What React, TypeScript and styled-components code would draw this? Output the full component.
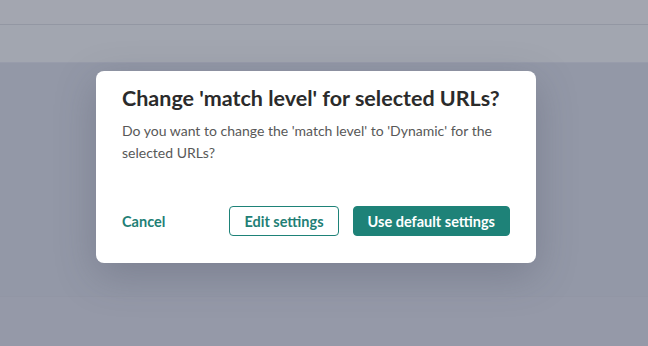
import React from 'react';
import styled, { createGlobalStyle } from 'styled-components';

const GlobalStyle = createGlobalStyle`
  html, body {
    margin: 0;
    padding: 0;
    height: 100%;
    overflow: hidden;
  }
  #root {
    height: 100%;
  }
  * {
    box-sizing: border-box;
  }
`;

const Page = styled.div`
  position: relative;
  width: 100%;
  height: 100%;
  background: #9599a8;
  font-family: Lato, 'Noto Sans', sans-serif;
`;

const TopBar = styled.div`
  height: 25px;
  background: #a3a6b0;
  border-bottom: 1px solid #9397a3;
`;

const Toolbar = styled.div`
  height: 38px;
  background: #a2a6b0;
  border-bottom: 1px solid #989cab;
`;

const Content = styled.div`
  height: 234px;
  background: #9398a7;
  border-bottom: 1px solid #9296a5;
`;

const Overlay = styled.div`
  position: absolute;
  inset: 0;
  display: flex;
  justify-content: center;
  align-items: flex-start;
  padding: 71px 16px 0 0;
`;

const Dialog = styled.div`
  width: 440px;
  height: 192px;
  background: #ffffff;
  border-radius: 8px;
  box-shadow: 0 12px 40px rgba(60, 66, 86, 0.28);
  padding: 13px 26px 27px 26px;
  display: flex;
  flex-direction: column;
`;

const Title = styled.h2`
  margin: 0;
  font-size: 21.5px;
  line-height: 28px;
  font-weight: 700;
  color: #2b2b2b;
`;

const Body = styled.p`
  margin: 8px 0 0;
  font-size: 14px;
  line-height: 22px;
  color: #585858;
`;

const Actions = styled.div`
  margin-top: auto;
  display: flex;
  align-items: center;
  gap: 14px;
`;

const TextButton = styled.button`
  margin-right: auto;
  border: none;
  background: none;
  padding: 0;
  font-family: inherit;
  font-size: 14.5px;
  font-weight: 700;
  color: #1f7f76;
  cursor: pointer;
`;

const Button = styled.button<{ $primary?: boolean }>`
  height: 30px;
  padding: 0 14px;
  border-radius: 4px;
  font-family: inherit;
  font-size: 14.5px;
  font-weight: 700;
  cursor: pointer;
  border: 1px solid #1e8278;
  background: ${p => (p.$primary ? '#1e8278' : '#ffffff')};
  color: ${p => (p.$primary ? '#ffffff' : '#1f7f76')};
`;

export default function App() {
  return (
    <Page>
      <GlobalStyle />
      <TopBar />
      <Toolbar />
      <Content />
      <Overlay>
        <Dialog role="dialog">
          <Title>Change 'match level' for selected URLs?</Title>
          <Body>
            Do you want to change the 'match level' to 'Dynamic' for the selected URLs?
          </Body>
          <Actions>
            <TextButton>Cancel</TextButton>
            <Button>Edit settings</Button>
            <Button $primary>Use default settings</Button>
          </Actions>
        </Dialog>
      </Overlay>
    </Page>
  );
}
